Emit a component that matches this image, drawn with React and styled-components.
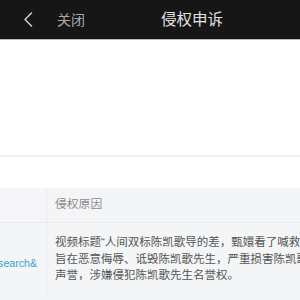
import React from "react";
import styled, { createGlobalStyle } from "styled-components";

const Global = createGlobalStyle`
  html, body {
    margin: 0;
    padding: 0;
    background: #ffffff;
    overflow: hidden;
  }
  body {
    font-family: "Liberation Sans", "Noto Sans CJK SC", sans-serif;
  }
`;

const Page = styled.div`
  width: 300px;
  height: 300px;
  overflow: hidden;
  display: flex;
  flex-direction: column;
  background: #ffffff;
`;

const Header = styled.header`
  height: 40px;
  flex: none;
  background: #161616;
  border-bottom: 1px solid #b9b9b9;
  display: flex;
  align-items: center;
  box-sizing: border-box;
  padding-left: 22px;
`;

const BackButton = styled.button`
  border: 0;
  background: none;
  padding: 0;
  margin: 0;
  width: 12px;
  height: 16px;
  display: flex;
  align-items: center;
  justify-content: center;
`;

const CloseLabel = styled.span`
  margin-left: 23px;
  font-size: 14px;
  color: #a9a9a9;
  line-height: 1;
`;

const Title = styled.h1`
  margin: 0 0 0 76px;
  font-size: 15.5px;
  font-weight: 400;
  color: #e2e2e2;
  line-height: 1;
`;

const Blank = styled.div`
  flex: none;
  height: ${(p) => p.$h}px;
  background: #ffffff;
`;

const Divider = styled.div`
  flex: none;
  height: 2px;
  background: #f1f1f2;
`;

const Table = styled.div`
  flex: 1;
  background: #f4f5f7;
  display: flex;
  flex-direction: column;
`;

const Row = styled.div`
  display: flex;
  min-height: ${(p) => p.$h || 0}px;
  border-bottom: ${(p) => (p.$bordered ? "1px solid #eaebed" : "none")};
`;

const KeyCell = styled.div`
  flex: none;
  width: 47px;
  border-right: 1px solid #eaebed;
  background: ${(p) => (p.$head ? "#f6f6f8" : "#f4f5f7")};
  display: flex;
  align-items: center;
  justify-content: flex-end;
  overflow: hidden;
  padding-right: 9px;
  box-sizing: border-box;
`;

const LinkText = styled.a`
  white-space: nowrap;
  font-size: 10.6px;
  color: #35a4c4;
  text-decoration: none;
  margin-top: 3px;
`;

const ValueCell = styled.div`
  flex: 1;
  padding: ${(p) => (p.$head ? "0 0 0 8px" : "11px 0 0 8px")};
  display: flex;
  align-items: ${(p) => (p.$head ? "center" : "flex-start")};
  min-width: 0;
`;

const HeadText = styled.span`
  font-size: 11.8px;
  color: #8b8b8b;
  line-height: 1;
`;

const Paragraph = styled.p`
  margin: 0;
  font-size: 11.5px;
  line-height: 16.5px;
  color: #555555;
  white-space: nowrap;
`;

export default function App() {
  return (
    <>
      <Global />
      <Page>
        <Header>
          <BackButton aria-label="返回">
            <svg width="10" height="15" viewBox="0 0 10 15">
              <path
                d="M8.5 1 L2 7.5 L8.5 14"
                fill="none"
                stroke="#cfcfcf"
                strokeWidth="1.5"
                strokeLinecap="round"
                strokeLinejoin="round"
              />
            </svg>
          </BackButton>
          <CloseLabel>关闭</CloseLabel>
          <Title>侵权申诉</Title>
        </Header>
        <Blank $h={115} />
        <Divider />
        <Blank $h={31} />
        <Table>
          <Row $h={34} $bordered>
            <KeyCell $head />
            <ValueCell $head>
              <HeadText>侵权原因</HeadText>
            </ValueCell>
          </Row>
          <Row $h={76}>
            <KeyCell>
              <LinkText href="#">https://www.ixigua.com/search&</LinkText>
            </KeyCell>
            <ValueCell>
              <Paragraph>
                视频标题“人间双标陈凯歌导的差，甄嬛看了喊救命”
                <br />
                旨在恶意侮辱、诋毁陈凯歌先生，严重损害陈凯歌先生的
                <br />
                声誉，涉嫌侵犯陈凯歌先生名誉权。
              </Paragraph>
            </ValueCell>
          </Row>
        </Table>
      </Page>
    </>
  );
}
